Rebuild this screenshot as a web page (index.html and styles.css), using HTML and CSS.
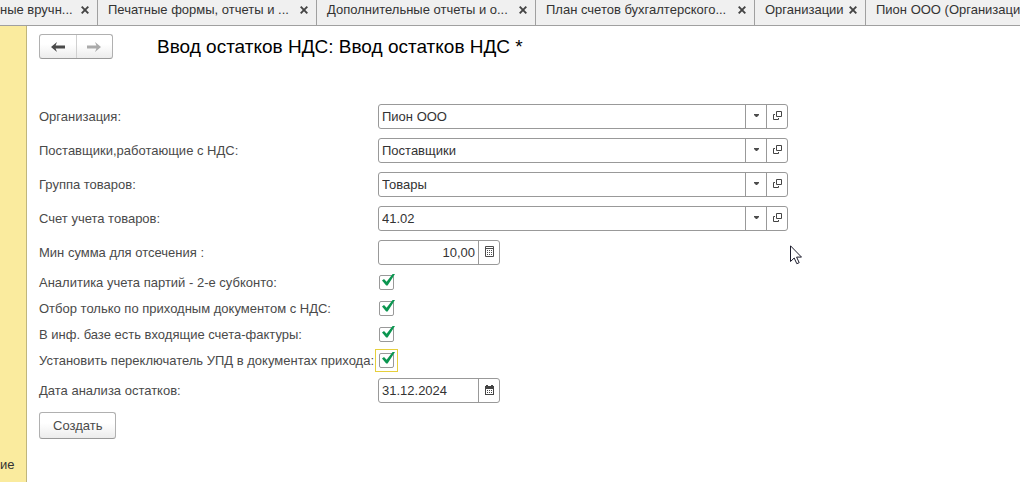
FILE: index.html
```html
<!DOCTYPE html>
<html lang="ru">
<head>
<meta charset="utf-8">
<meta name="viewport" content="width=device-width, initial-scale=1">
<title>Ввод остатков НДС</title>
<link rel="stylesheet" href="styles.css">
</head>
<body>
<svg class="defs" aria-hidden="true">
  <symbol id="close" viewBox="0 0 8 8"><path d="M.7.7l6.600 6.600M7.300.7L.7 7.300" stroke="#444" stroke-width="1.900" fill="none"/></symbol>
  <symbol id="open" viewBox="0 0 9 9"><path d="M3.500.5h5v5h-5zM2 3.500H.5v5h5V7" fill="none" stroke="#444"/></symbol>
  <symbol id="down" viewBox="0 0 5 3"><path d="M0 0h5v1L3 3H2L0 1z" fill="#4c4c4c"/></symbol>
  <symbol id="check" viewBox="0 0 13 12"><path d="M0 6.600l2-1.500 2.600 2.700L10.600 0H13L5.600 11.500H4.200z" fill="#0b9650"/></symbol>
</svg>
<nav class="tabs">
  <div class="tab tab-first"><span class="tab-name">ные вручн...</span><button class="tab-close" aria-label="Закрыть"><svg><use href="#close"/></svg></button></div>
  <div class="tab tab-wide"><span class="tab-name">Печатные формы, отчеты и ...</span><button class="tab-close" aria-label="Закрыть"><svg><use href="#close"/></svg></button></div>
  <div class="tab tab-wide"><span class="tab-name">Дополнительные отчеты и о...</span><button class="tab-close" aria-label="Закрыть"><svg><use href="#close"/></svg></button></div>
  <div class="tab tab-wide"><span class="tab-name">План счетов бухгалтерского...</span><button class="tab-close" aria-label="Закрыть"><svg><use href="#close"/></svg></button></div>
  <div class="tab tab-short"><span class="tab-name">Организации</span><button class="tab-close" aria-label="Закрыть"><svg><use href="#close"/></svg></button></div>
  <div class="tab tab-last"><span class="tab-name">Пион ООО (Организация)</span></div>
</nav>
<div class="workspace">
  <aside class="sidebar"><span>ие</span></aside>
  <main class="page">
    <header class="heading">
      <div class="history">
        <button aria-label="Назад"><svg class="arrow" viewBox="0 0 14 10"><path d="M0 5l6-5-1.400 3.600H14v2.800H4.600L6 10z" fill="#4a4a4a"/></svg></button>
        <button aria-label="Вперед"><svg class="arrow" viewBox="0 0 14 10"><path d="M14 5L8 0l1.400 3.600H0v2.800h9.400L8 10z" fill="#aaa"/></svg></button>
      </div>
      <h1>Ввод остатков НДС: Ввод остатков НДС *</h1>
    </header>
    <form class="form">
      <div class="row"><label for="org">Организация:</label>
        <div class="field"><input id="org" type="text" value="Пион ООО"><button type="button" aria-label="Выбрать"><svg class="down"><use href="#down"/></svg></button><button type="button" aria-label="Открыть"><svg class="open"><use href="#open"/></svg></button></div></div>
      <div class="row"><label for="sup">Поставщики,работающие с НДС:</label>
        <div class="field"><input id="sup" type="text" value="Поставщики"><button type="button" aria-label="Выбрать"><svg class="down"><use href="#down"/></svg></button><button type="button" aria-label="Открыть"><svg class="open"><use href="#open"/></svg></button></div></div>
      <div class="row"><label for="grp">Группа товаров:</label>
        <div class="field"><input id="grp" type="text" value="Товары"><button type="button" aria-label="Выбрать"><svg class="down"><use href="#down"/></svg></button><button type="button" aria-label="Открыть"><svg class="open"><use href="#open"/></svg></button></div></div>
      <div class="row"><label for="acc">Счет учета товаров:</label>
        <div class="field"><input id="acc" type="text" value="41.02"><button type="button" aria-label="Выбрать"><svg class="down"><use href="#down"/></svg></button><button type="button" aria-label="Открыть"><svg class="open"><use href="#open"/></svg></button></div></div>
      <div class="row"><label for="min">Мин сумма для отсечения :</label>
        <div class="field field-small"><input id="min" class="number" type="text" value="10,00"><button type="button" aria-label="Калькулятор"><svg class="calc" viewBox="0 0 9 11"><path d="M.5.5h8v10h-8zM1 2.500h7" fill="none" stroke="#4c4c4c"/><path d="M2 4h1v1H2zM4 4h1v1H4zM6 4h1v1H6zM2 6h1v1H2zM4 6h1v1H4zM6 6h1v1H6zM2 8h1v1H2zM4 8h1v1H4zM6 8h1v1H6z" fill="#4c4c4c"/></svg></button></div></div>
      <div class="checks">
        <div class="row"><label for="c1">Аналитика учета партий - 2-е субконто:</label><span class="check"><input id="c1" type="checkbox" checked><svg><use href="#check"/></svg></span></div>
        <div class="row"><label for="c2">Отбор только по приходным документом с НДС:</label><span class="check"><input id="c2" type="checkbox" checked><svg><use href="#check"/></svg></span></div>
        <div class="row"><label for="c3">В инф. базе есть входящие счета-фактуры:</label><span class="check"><input id="c3" type="checkbox" checked><svg><use href="#check"/></svg></span></div>
        <div class="row"><label for="c4">Установить переключатель УПД в документах прихода:</label><span class="check check-active"><input id="c4" type="checkbox" checked><svg><use href="#check"/></svg></span></div>
      </div>
      <div class="row"><label for="date">Дата анализа остатков:</label>
        <div class="field field-small"><input id="date" type="text" value="31.12.2024"><button type="button" aria-label="Календарь"><svg class="cal" viewBox="0 0 9 10"><path d="M0 1h1V0h2v1h3V0h2v1h1v9H0zM1 4v5h7V4z" fill="#444" fill-rule="evenodd"/><path d="M2 5h1v1H2zM4 5h1v1H4zM6 5h1v1H6zM2 7h1v1H2zM4 7h1v1H4zM6 7h1v1H6z" fill="#444"/></svg></button></div></div>
      <button type="button" class="create">Создать</button>
    </form>
  </main>
</div>
<svg class="cursor" viewBox="0 0 12 20" aria-hidden="true"><path d="M.5.8v15.700l3.700-3.500 2.600 5.700 2.400-1-2.600-5.600h4.900z" fill="#fff" stroke="#1c1c2c"/></svg>
</body>
</html>
```
FILE: styles.css
```css
* { box-sizing: border-box; }
body {
  margin: 0;
  min-height: 100vh;
  display: flex;
  flex-direction: column;
  background: #fff;
  color: #333;
  font: 13px/16px "Liberation Sans", Arial, sans-serif;
  overflow-x: hidden;
}
button, input { font: inherit; color: inherit; margin: 0; }
button { padding: 0; border: 0; background: none; }
svg { display: block; }
.defs { position: absolute; width: 0; height: 0; }

.tabs {
  display: flex;
  height: 26px;
  overflow: hidden;
  background: #f0f0f0;
  border-bottom: 1px solid #a0a0a0;
}
.tab {
  display: flex;
  flex: none;
  justify-content: space-between;
  align-items: center;
  padding: 0 8px 6px 10px;
  border-right: 1px solid #a0a0a0;
  white-space: nowrap;
}
.tab-first { width: 98px; padding-left: 0; }
.tab-wide { width: 219px; }
.tab-short { width: 111px; }
.tab-last { border-right: 0; }
.tab-close svg { width: 8px; height: 8px; }

.workspace { display: flex; flex: 1; }
.sidebar {
  display: flex;
  align-items: flex-end;
  flex: none;
  width: 27px;
  padding-bottom: 9px;
  background: #faeb9e;
  border-right: 1px solid #c0b67c;
}
.page { flex: 1; padding: 8px 12px; }
.heading { display: flex; align-items: center; gap: 44px; }
.history {
  display: flex;
  width: 74px;
  height: 25px;
  border: 1px solid #b0b0b0;
  border-bottom-color: #999;
  border-radius: 3px;
  background: linear-gradient(#fff 40%, #ececec);
}
.history button { flex: 1; display: grid; place-items: center; }
.history button + button { border-left: 1px solid #d0d0d0; }
.arrow { width: 14px; height: 10px; }
h1 { margin: 0; font-size: 19px; line-height: 24px; font-weight: 400; color: #000; }

.form { display: flex; flex-direction: column; gap: 9px; margin-top: 45px; color: #4a4a4a; }
.row { display: grid; grid-template-columns: 339px minmax(0, 410px); align-items: center; white-space: nowrap; }
.field {
  display: flex;
  height: 25px;
  border: 1px solid #999;
  border-radius: 3px;
  background: #fff;
  color: #333;
}
.field-small { width: 122px; }
.field input { flex: 1; min-width: 0; padding: 0 3px; border: 0; outline: 0; background: none; }
.field .number { text-align: right; }
.field button { display: grid; place-items: center; width: 21px; padding-bottom: 2px; border-left: 1px solid #999; }
.open { width: 9px; height: 9px; }
.down { width: 5px; height: 3px; }
.calc { width: 9px; height: 11px; }
.cal { width: 9px; height: 10px; }

.checks { display: flex; flex-direction: column; gap: 3px; margin: -3px 0; }
.check {
  position: relative;
  display: grid;
  place-items: center;
  width: 23px;
  height: 23px;
  margin-left: -3px;
  border: 1px solid transparent;
}
.check-active { border-color: #e6cf3c; }
.check input { appearance: none; width: 15px; height: 15px; border: 1px solid #999; border-radius: 2px; background: #fff; }
.check svg { position: absolute; left: 6px; top: 2px; width: 13px; height: 12px; pointer-events: none; }
.create {
  align-self: flex-start;
  height: 27px;
  padding: 0 13px;
  border: 1px solid #b0b0b0;
  border-bottom-color: #999;
  border-radius: 3px;
  background: linear-gradient(#fff 40%, #ececec);
}
.cursor { position: absolute; left: 790px; top: 245px; width: 12px; height: 20px; }
```
